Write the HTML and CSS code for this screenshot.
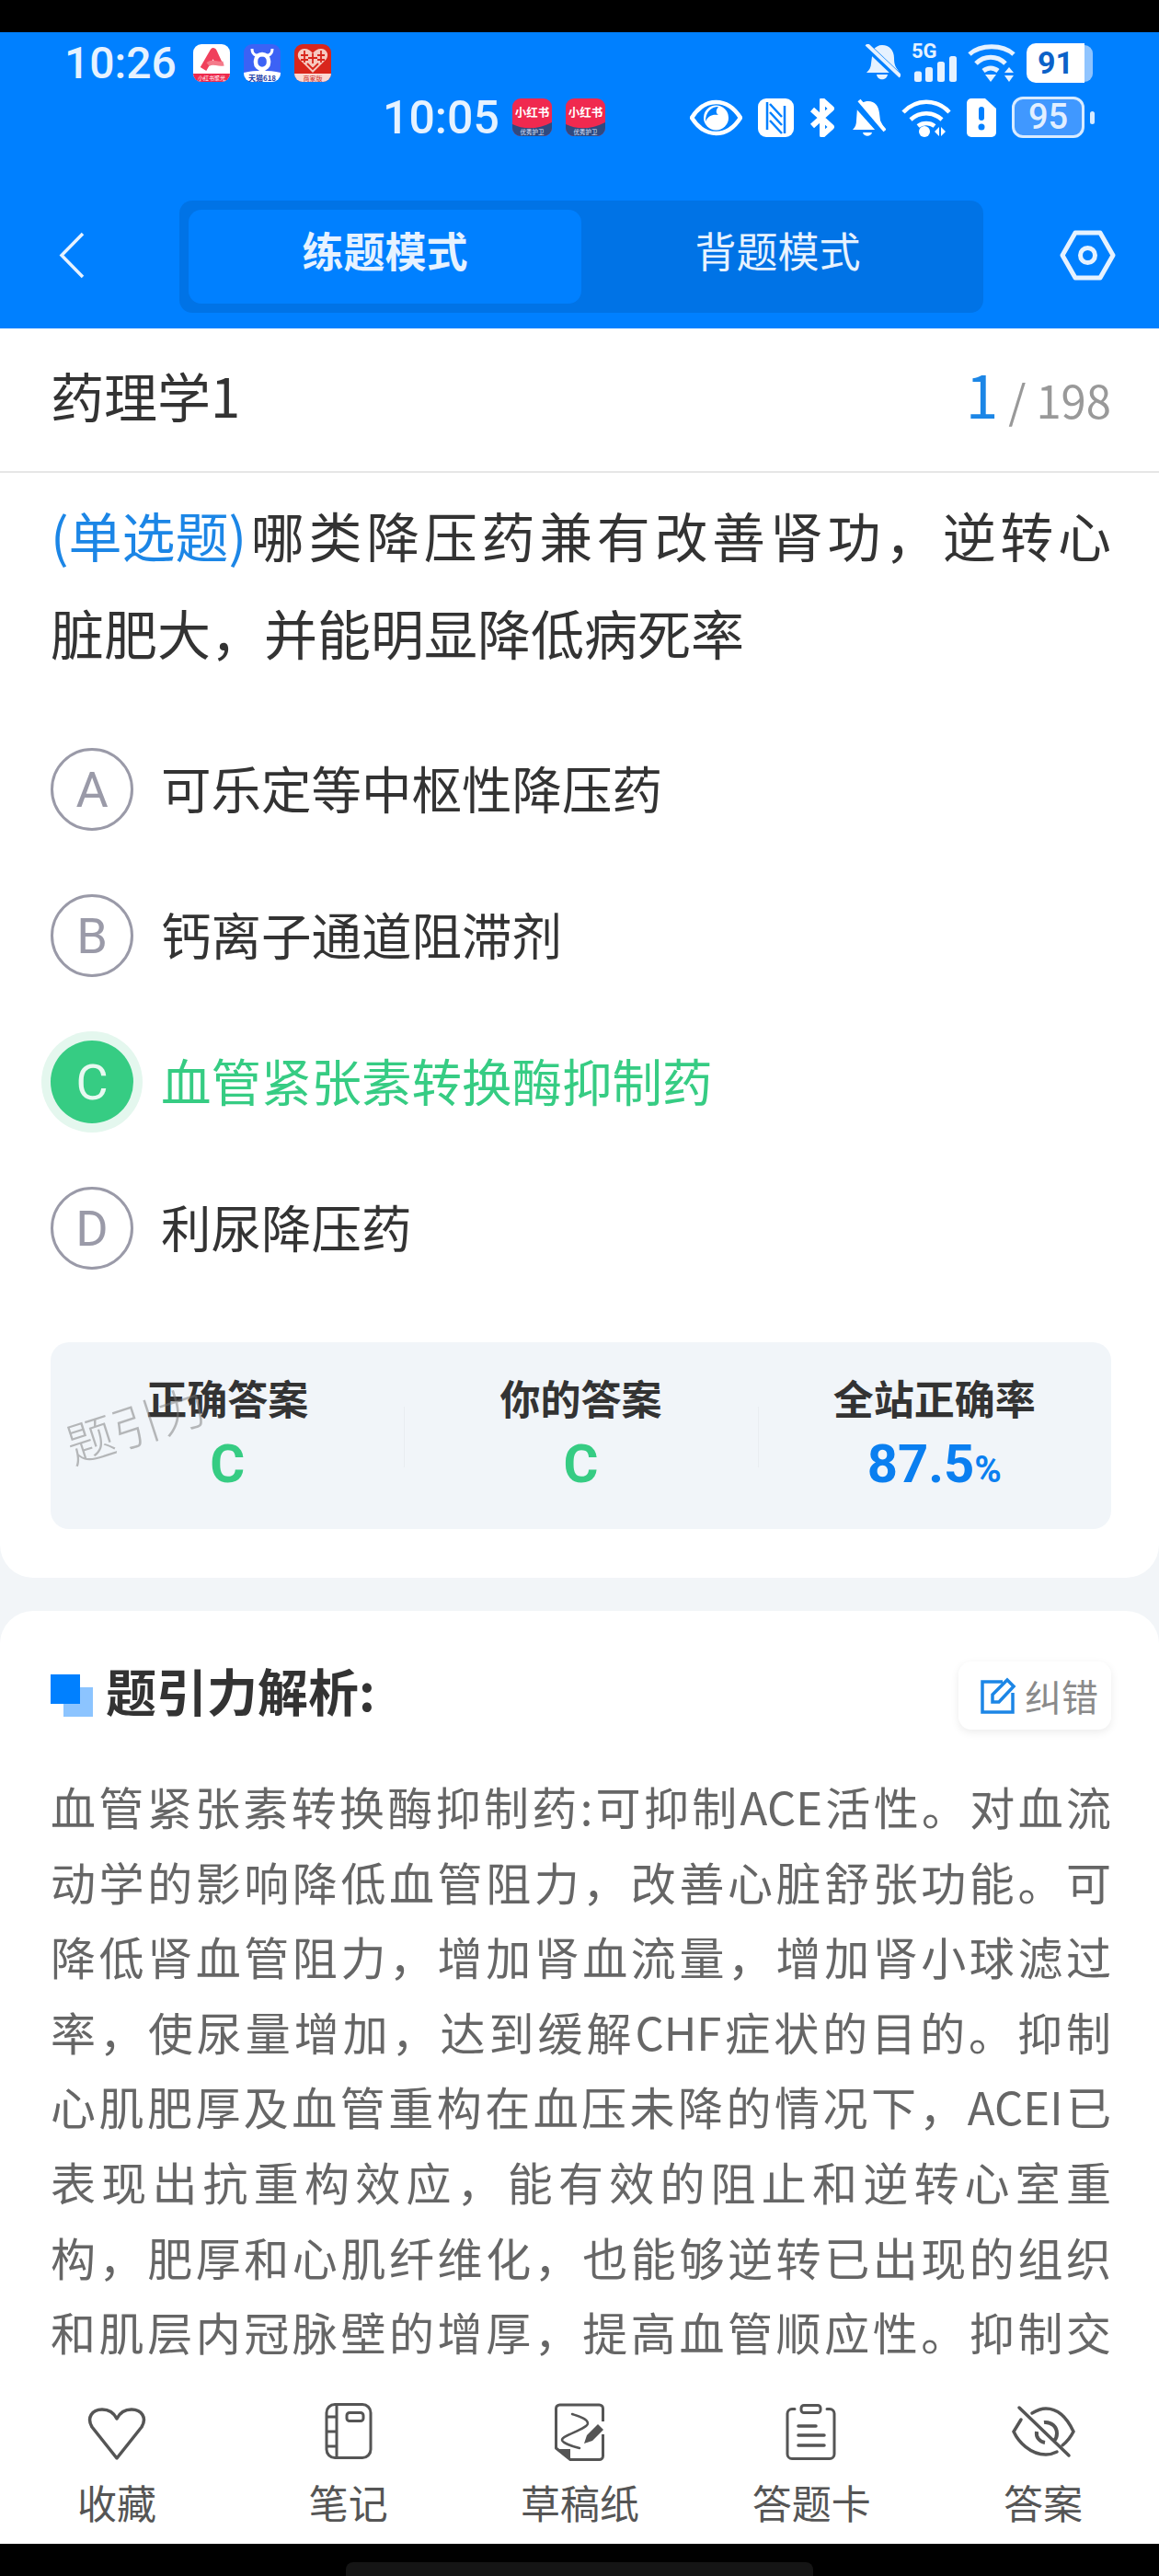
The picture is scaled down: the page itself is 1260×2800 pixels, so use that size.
FILE: index.html
```html
<!DOCTYPE html>
<html lang="zh-CN">
<head>
  <meta charset="UTF-8">
  <meta name="viewport" content="width=device-width, initial-scale=1.0">
  <title>药理学1</title>
  <link rel="stylesheet" href="styles.css">
</head>

<body>
  <div class="camera-strip"></div>

  <header class="top">
    <div class="status status-one">
      <span class="clock">10:26</span>
      <svg class="app" viewBox="0 0 40 41">
        <rect width="40" height="41" rx="9" fill="#fff"/>
        <path d="M0 32h40a9 9 0 0 1-9 9H9a9 9 0 0 1-9-9z" fill="#ee2a4d"/>
        <path d="M11 27 22 8l6 13" fill="none" stroke="#f0405c" stroke-width="7.500" stroke-linejoin="round"/>
        <path d="M16 22c6-5 10 1 17-1" fill="none" stroke="#f47a8a" stroke-width="5"/>
        <text x="20" y="39" class="app-label" fill="#fff" font-size="6">小红书聚光</text>
      </svg>
      <svg class="app" viewBox="0 0 40 41">
        <rect width="40" height="41" rx="9" fill="#3c62f5"/>
        <path d="M0 31c13-3 27-3 40 0v1a9 9 0 0 1-9 9H9a9 9 0 0 1-9-9z" fill="#fff"/>
        <path d="M9 5c0 4 1 6 4 7h14c3-1 4-3 4-7" fill="none" stroke="#fff" stroke-width="3"/>
        <rect x="13" y="11" width="14" height="16" rx="7" fill="none" stroke="#fff" stroke-width="4.500"/>
        <text x="20" y="39.500" class="app-label app-bold" fill="#1f3fa8" font-size="8">天猫618</text>
      </svg>
      <svg class="app" viewBox="0 0 40 41">
        <rect width="40" height="41" rx="9" fill="#d9261c"/>
        <path d="M0 32h40a9 9 0 0 1-9 9H9a9 9 0 0 1-9-9z" fill="#fbd9d4"/>
        <path d="M20 31 5 16c-3-5 0-11 6-11 4 0 7 2 9 5 2-3 5-5 9-5 6 0 9 6 6 11z" fill="#f6c9c0"/>
        <path d="M11 7v13M7 12h8M7 17h8M29 7v13M25 12h8M25 17h8M14 21l6 6 6-6M20 10v11M15 15h10" stroke="#d9261c" stroke-width="1.800" fill="none"/>
        <text x="20" y="39.500" class="app-label" fill="#c8281e" font-size="7">商家版</text>
      </svg>
      <div class="status-icons">
        <svg class="ico" width="39" height="41" viewBox="0 0 39 41">
          <path d="M19 1c8 0 13 6 13 14 0 6 1 9 4 13l2 3H2c3-3 5-6 5-10L9 6c3-3 6-5 10-5zM13 33h12c-1 7-11 7-12 0z" fill="#e6f2ff"/>
          <path d="M1 1l37 35" stroke="#0080ff" stroke-width="8"/>
          <path d="M2 0l37 35" stroke="#e6f2ff" stroke-width="4"/>
        </svg>
        <svg class="ico" width="49" height="50" viewBox="0 0 49 50">
          <text x="0" y="19" class="net" font-size="22">5G</text>
          <rect x="3" y="33.500" width="8" height="11.500" rx="2.500" fill="#e6f2ff"/>
          <rect x="15" y="29" width="8" height="16" rx="2.500" fill="#e6f2ff"/>
          <rect x="28" y="23" width="8" height="22" rx="2.500" fill="#e6f2ff"/>
          <rect x="41" y="17" width="8" height="28" rx="2.500" fill="#e6f2ff"/>
        </svg>
        <svg class="ico" width="52" height="42" viewBox="0 0 52 42">
          <path d="M2 11C14 0 38 0 50 11M9 21c9-9 23-9 32 0M17 29c5-4 11-4 16 0" fill="none" stroke="#e6f2ff" stroke-width="5"/>
          <path d="M19 33h12l-6 8z" fill="#e6f2ff"/>
          <path d="M45 25l5 6H40zM45 41l-5-7h10z" fill="#e6f2ff"/>
        </svg>
        <div class="batt-one"><span class="batt-fill">91</span><i></i></div>
      </div>
    </div>

    <div class="status status-two">
      <span class="clock clock-big">10:05</span>
      <svg class="app app-red" viewBox="0 0 43 41">
        <rect width="43" height="41" rx="9" fill="#f0294f"/>
        <path d="M0 28c12 6 28 6 43-2v6a9 9 0 0 1-9 9H9a9 9 0 0 1-9-9z" fill="#2f4a80"/>
        <text x="21.500" y="20" class="app-label app-bold" fill="#fff" font-size="12.500">小红书</text>
        <text x="21.500" y="38.500" class="app-label" fill="#dfe8ff" font-size="6.500">优秀护卫</text>
      </svg>
      <svg class="app app-red" viewBox="0 0 43 41">
        <rect width="43" height="41" rx="9" fill="#f0294f"/>
        <path d="M0 28c12 6 28 6 43-2v6a9 9 0 0 1-9 9H9a9 9 0 0 1-9-9z" fill="#2f4a80"/>
        <text x="21.500" y="20" class="app-label app-bold" fill="#fff" font-size="12.500">小红书</text>
        <text x="21.500" y="38.500" class="app-label" fill="#dfe8ff" font-size="6.500">优秀护卫</text>
      </svg>
      <div class="status-icons icons-wide">
        <svg class="ico" width="57" height="40" viewBox="0 0 57 40">
          <path d="M2 20C9 9 18 3 28.500 3S48 9 55 20c-7 11-16 17-26.500 17S9 31 2 20z" fill="none" stroke="#fff" stroke-width="4.500"/>
          <circle cx="28.500" cy="20" r="13.500" fill="#fff"/>
          <path d="M31 8c-8 0-14 6-14 16 3-6 7-8 14-7-3-2-3-5 0-9z" fill="#0080ff"/>
        </svg>
        <svg class="ico" width="39" height="42" viewBox="0 0 39 42">
          <rect width="39" height="42" rx="9" fill="#fff"/>
          <path d="M10 4v30M29 8v30" stroke="#0080ff" stroke-width="2.500"/>
          <path d="M13 6l13 14M13 15l13 14M13 24l13 14" stroke="#0080ff" stroke-width="2.500"/>
        </svg>
        <svg class="ico" width="27" height="42" viewBox="0 0 27 42">
          <path d="M3 12l21 19-10 9V2l10 9L3 30" fill="none" stroke="#fff" stroke-width="6" stroke-linejoin="round"/>
        </svg>
        <svg class="ico" width="39" height="42" viewBox="0 0 39 42">
          <path d="M8 10c3-5 7-7 12-7 7 0 11 5 12 13l1 8 5 10H3c3-3 4-6 4-10zM14 37h10c-1 5-9 5-10 0z" fill="#fff"/>
          <path d="M4 2l33 37" stroke="#0080ff" stroke-width="8"/>
          <path d="M10 2l28 33" stroke="#fff" stroke-width="4"/>
        </svg>
        <svg class="ico" width="54" height="42" viewBox="0 0 54 42">
          <path d="M2 15c14-15 36-15 50 0M10 23c10-9 24-9 34 0M18 30c5-4 13-4 18 0" fill="none" stroke="#fff" stroke-width="4.500"/>
          <circle cx="25" cy="36" r="6" fill="#fff"/>
          <path d="M36 36l5-5v10zM48 36l-5-5v10z" fill="#fff"/>
        </svg>
        <svg class="ico" width="32" height="42" viewBox="0 0 32 42">
          <path d="M5 0h15l12 11v26a5 5 0 0 1-5 5H5a5 5 0 0 1-5-5V5a5 5 0 0 1 5-5z" fill="#fff"/>
          <rect x="13" y="9" width="6" height="15" rx="3" fill="#0080ff"/>
          <circle cx="16" cy="31" r="3.500" fill="#0080ff"/>
        </svg>
        <div class="batt-two"><span class="batt-body">95</span><i></i></div>
      </div>
    </div>

    <nav class="nav">
      <svg class="back" width="28" height="51" viewBox="0 0 28 51">
        <path d="M26 2 3 25.500 26 49" fill="none" stroke="#e6f2ff" stroke-width="3.500"/>
      </svg>
      <div class="tabs">
        <div class="tab tab-active">练题模式</div>
        <div class="tab">背题模式</div>
      </div>
      <svg class="gear" width="61" height="55" viewBox="0 0 61 55">
        <path d="M17 3h27l14 24.500L44 52H17L3 27.500z" fill="none" stroke="#e6f2ff" stroke-width="5" stroke-linejoin="round"/>
        <circle cx="30.500" cy="27.500" r="8" fill="none" stroke="#e6f2ff" stroke-width="5"/>
      </svg>
    </nav>
  </header>

  <main class="scroll">
    <section class="card card-question">
      <div class="title-row">
        <span class="subject">药理学1</span>
        <span class="counter"><b>1</b> / 198</span>
      </div>

      <div class="question">
        <span class="q-line"><span class="qtype">(单选题)</span>哪类降压药兼有改善肾功，逆转心</span>
        <span class="q-last">脏肥大，并能明显降低病死率</span>
      </div>

      <ul class="options">
        <li class="option"><span class="letter">A</span><span class="option-text">可乐定等中枢性降压药</span></li>
        <li class="option"><span class="letter">B</span><span class="option-text">钙离子通道阻滞剂</span></li>
        <li class="option option-right"><span class="letter">C</span><span class="option-text">血管紧张素转换酶抑制药</span></li>
        <li class="option"><span class="letter">D</span><span class="option-text">利尿降压药</span></li>
      </ul>

      <div class="stats">
        <div class="stat">
          <div class="stat-label">正确答案</div>
          <div class="stat-value green">C</div>
        </div>
        <div class="stat">
          <div class="stat-label">你的答案</div>
          <div class="stat-value green">C</div>
        </div>
        <div class="stat">
          <div class="stat-label">全站正确率</div>
          <div class="stat-value blue">87.5<small>%</small></div>
        </div>
        <span class="watermark">题引力</span>
      </div>
    </section>

    <section class="card card-analysis">
      <div class="analysis-head">
        <span class="mark"><i></i></span>
        <h2>题引力解析:</h2>
        <button class="report">
          <svg width="40" height="40" viewBox="0 0 40 40">
            <path d="M24 5H2v33h33V17" fill="none" stroke="#1c86e6" stroke-width="3.500"/>
            <path d="M13 27V19L29 3l7 7-16 17z" fill="none" stroke="#1c86e6" stroke-width="3.500"/>
          </svg>
          纠错
        </button>
      </div>
      <p class="analysis">血管紧张素转换酶抑制药:可抑制ACE活性。对血流<br>动学的影响降低血管阻力，改善心脏舒张功能。可<br>降低肾血管阻力，增加肾血流量，增加肾小球滤过<br>率，使尿量增加，达到缓解CHF症状的目的。抑制<br>心肌肥厚及血管重构在血压未降的情况下，ACEI已<br>表现出抗重构效应，能有效的阻止和逆转心室重<br>构，肥厚和心肌纤维化，也能够逆转已出现的组织<br>和肌层内冠脉壁的增厚，提高血管顺应性。抑制交</p>
    </section>
  </main>

  <footer class="toolbar">
    <div class="tool">
      <svg width="66" height="66" viewBox="0 0 66 66">
        <path d="M33 61 6 27C0 17 6 8 17 8c7 0 13 4 16 10C36 12 42 8 49 8c11 0 17 9 11 19z" fill="none" stroke="#555" stroke-width="3.500" stroke-linejoin="round"/>
      </svg>
      <span>收藏</span>
    </div>
    <div class="tool">
      <svg width="66" height="66" viewBox="0 0 66 66">
        <rect x="9" y="2.500" width="48" height="58" rx="9" fill="none" stroke="#555" stroke-width="3"/>
        <path d="M20 2.500v58M9 16h11M9 32h11M9 48h11" fill="none" stroke="#555" stroke-width="3"/>
        <rect x="31" y="11.500" width="18" height="9" rx="3" fill="none" stroke="#555" stroke-width="3"/>
      </svg>
      <span>笔记</span>
    </div>
    <div class="tool">
      <svg width="66" height="66" viewBox="0 0 66 66">
        <path d="M58.500 21V7a4 4 0 0 0-4-4H11.500a4 4 0 0 0-4 4v43L23 62.500h31.500a4 4 0 0 0 4-4V35" fill="none" stroke="#555" stroke-width="3" stroke-linejoin="round"/>
        <path d="M8 51h15v12z" fill="#555"/>
        <path d="M25 13c6 2 17 5 17 10 0 6-28 13-28 18 0 3 11 7 19 9" fill="none" stroke="#555" stroke-width="2.500" stroke-linecap="round"/>
        <path d="M38 45l3-9 12-12 6 6-12 12z" fill="#555"/>
      </svg>
      <span>草稿纸</span>
    </div>
    <div class="tool">
      <svg width="66" height="66" viewBox="0 0 66 66">
        <path d="M15 7.500h-3a5 5 0 0 0-5 5v44a5 5 0 0 0 5 5h41a5 5 0 0 0 5-5v-44a5 5 0 0 0-5-5h-3" fill="none" stroke="#555" stroke-width="3" stroke-linecap="round"/>
        <rect x="22" y="3.500" width="21" height="8" rx="3" fill="none" stroke="#555" stroke-width="3"/>
        <path d="M19 26h19M19 36h28M19 47h28" fill="none" stroke="#555" stroke-width="3.500" stroke-linecap="round"/>
      </svg>
      <span>答题卡</span>
    </div>
    <div class="tool">
      <svg width="70" height="66" viewBox="0 0 70 66">
        <path d="M11 19 3 32c5 11 18 25 35 25 4 0 8-1 12-3M23 12c5-3 10-5 15-5 13 0 23 10 30 25-3 6-7 11-12 15" fill="none" stroke="#555" stroke-width="3.500" stroke-linecap="round"/>
        <path d="M36 22c8-1 14 5 14 12 0 3-1 6-3 8M28 32c-1 6 3 11 9 12" fill="none" stroke="#555" stroke-width="4"/>
        <path d="M9 6 63 58" stroke="#555" stroke-width="3.500" stroke-linecap="round"/>
      </svg>
      <span>答案</span>
    </div>
  </footer>

  <div class="gesture-strip"><div class="home-pill"></div></div>
</body>
</html>
```

FILE: styles.css
```css
* {
  box-sizing: border-box;
}

body {
  margin: 0;
  width: 1260px;
  height: 2800px;
  overflow: hidden;
  display: flex;
  flex-direction: column;
  background-color: #f2f5f8;
  color: #333;
  font-family: "Noto Sans CJK SC", "Noto Sans", sans-serif;
}

.camera-strip {
  height: 35px;
  background-color: #000;
}

/* header: two status rows and the mode tabs */
.top {
  height: 322px;
  background-color: #0080ff;
  color: #e6f2ff;
}

.status {
  display: flex;
  align-items: center;
  padding-right: 70px;
}

.status-one {
  height: 43px;
  margin-top: 12px;
  padding-left: 70px;
  gap: 15px;
}

.status-two {
  height: 43px;
  margin-top: 16px;
  padding-left: 416px;
  gap: 15px;
}

.clock {
  width: 125px;
  font-family: Roboto, sans-serif;
  font-size: 48px;
  font-weight: 500;
  line-height: 1;
}

.clock-big {
  width: 126px;
  font-size: 50px;
}

.app {
  width: 40px;
  height: 41px;
  flex: none;
}

.app-red {
  width: 43px;
}

.app-label {
  text-anchor: middle;
  font-family: "Noto Sans CJK SC", sans-serif;
}

.app-bold {
  font-weight: 700;
}

.net {
  font-family: Roboto, sans-serif;
  font-weight: 700;
  fill: #e6f2ff;
}

.status-icons {
  margin-left: auto;
  display: flex;
  align-items: center;
  gap: 12px;
}

.icons-wide {
  gap: 17px;
}

.ico {
  display: block;
  flex: none;
}

.batt-one {
  display: flex;
  align-items: center;
  width: 74px;
  height: 43px;
}

.batt-fill {
  width: 63px;
  height: 43px;
  border-radius: 10px 0 0 10px;
  background-color: #fff;
  color: #0b62c8;
  font-family: Roboto, sans-serif;
  font-size: 34px;
  font-weight: 700;
  line-height: 43px;
  text-align: center;
}

.batt-one i {
  width: 9px;
  height: 40px;
  border-radius: 0 10px 10px 0;
  background-color: #8fc4ff;
}

.batt-two {
  display: flex;
  align-items: center;
  gap: 6px;
}

.batt-body {
  width: 79px;
  height: 45px;
  border: 3px solid #d8ebff;
  border-radius: 12px;
  background-color: #4098ff;
  color: #e2efff;
  font-family: Roboto, sans-serif;
  font-size: 38px;
  font-weight: 500;
  line-height: 38px;
  text-align: center;
}

.batt-two i {
  width: 5px;
  height: 14px;
  border-radius: 3px;
  background-color: #d8ebff;
}

.nav {
  display: flex;
  align-items: center;
  height: 122px;
  margin-top: 69px;
  padding-left: 64px;
}

.back,
.gear {
  margin-bottom: 3px;
}

.tabs {
  display: flex;
  width: 874px;
  height: 122px;
  margin-left: 103px;
  padding: 10px;
  border-radius: 14px;
  background-color: #0073e6;
}

.tab {
  flex: 1;
  font-size: 45px;
  line-height: 88px;
  text-align: center;
}

.tab-active {
  border-radius: 14px;
  background-color: #0080ff;
  font-weight: 700;
}

.gear {
  margin-left: 83px;
}

/* scrolling content under the header */
.scroll {
  flex: 1;
  min-height: 0;
  overflow: hidden;
}

.card {
  background-color: #fff;
}

.card-question {
  height: 1358px;
  border-radius: 0 0 36px 36px;
}

.title-row {
  display: flex;
  align-items: center;
  justify-content: space-between;
  height: 157px;
  padding: 0 52px 12px 55px;
  border-bottom: 2px solid #e6e6e6;
}

.subject {
  font-size: 58px;
}

.counter {
  margin-bottom: 3px;
  color: #999;
  font-size: 49px;
}

.counter b {
  color: #1c86e6;
  font-size: 64px;
  font-weight: 400;
}

.question {
  margin: 14px 52px 0 55px;
  font-size: 58px;
  line-height: 106px;
}

.q-line,
.q-last {
  display: block;
}

.q-line {
  text-align: justify;
  text-align-last: justify;
}

.qtype {
  display: inline-block;
  color: #1c86e6;
}

.options {
  margin: 73px 0 0;
  padding: 0 0 10px 55px;
  list-style: none;
}

.option {
  display: flex;
  align-items: center;
  gap: 30px;
  height: 90px;
  margin-bottom: 69px;
  font-size: 54.5px;
}

.option-text {
  margin-bottom: 5px;
}

.letter {
  display: flex;
  align-items: center;
  justify-content: center;
  width: 90px;
  height: 90px;
  border: 3px solid #9a9aa8;
  border-radius: 50%;
  color: #9a9aa8;
  font-family: Roboto, sans-serif;
  font-size: 54px;
}

.option-right {
  color: #36cc83;
}

.option-right .letter {
  border: none;
  background-color: #36cc83;
  box-shadow: 0 0 0 10px #e4f7ee;
  color: #e8f9f1;
}

.stats {
  position: relative;
  display: grid;
  grid-template-columns: repeat(3, 1fr);
  height: 203px;
  margin: 0 52px 0 55px;
  padding-top: 30px;
  border-radius: 20px;
  background-color: #f1f5f9;
  text-align: center;
}

.stat + .stat {
  background: linear-gradient(#e9edf1, #e9edf1) left 40px / 1px 66px no-repeat;
}

.stat-label {
  font-size: 44px;
  font-weight: 700;
  line-height: 60px;
}

.stat-value {
  margin-top: 9px;
  font-family: Roboto, sans-serif;
  font-size: 58px;
  font-weight: 700;
  line-height: 66px;
}

.stat-value small {
  font-size: 40px;
}

.green {
  color: #36cc83;
}

.blue {
  color: #0a7ff0;
}

.watermark {
  position: absolute;
  left: 14px;
  top: 50px;
  color: rgba(120, 120, 120, 0.5);
  font-size: 52px;
  font-weight: 300;
  transform: rotate(-18deg);
}

.card-analysis {
  height: 900px;
  margin-top: 36px;
  padding: 55px 52px 0 55px;
  border-radius: 36px 36px 0 0;
}

.analysis-head {
  display: flex;
  align-items: center;
  height: 74px;
}

.mark {
  position: relative;
  width: 46px;
  height: 46px;
}

.mark::before,
.mark i {
  content: "";
  position: absolute;
  width: 32px;
  height: 32px;
}

.mark::before {
  left: 0;
  top: 0;
  z-index: 1;
  background-color: #0080ff;
}

.mark i {
  left: 14px;
  top: 14px;
  background-color: #8cc4ff;
}

.analysis-head h2 {
  margin: 0 0 14px 14px;
  font-size: 55px;
  font-weight: 700;
  line-height: 60px;
}

.report {
  display: flex;
  align-items: center;
  gap: 8px;
  width: 166px;
  height: 74px;
  margin-left: auto;
  padding: 0 0 0 24px;
  border: none;
  border-radius: 14px;
  background-color: #fff;
  box-shadow: 0 3px 10px rgba(0, 0, 0, 0.08);
  color: #8a8a8a;
  font-family: inherit;
  font-size: 40px;
}

.analysis {
  margin: 42px 0 0;
  color: #666;
  font-size: 49px;
  line-height: 81.6px;
  text-align: justify;
  text-align-last: justify;
}

/* bottom action bar */
.toolbar {
  display: flex;
  flex: none;
  height: 190px;
  margin-top: -190px;
  position: relative;
  padding: 36px 0 0 1px;
  background-color: #fff;
}

.tool {
  width: 252.5px;
  display: flex;
  flex-direction: column;
  align-items: center;
  color: #555;
  font-size: 43px;
}

.tool svg {
  display: block;
  height: 66px;
}

.tool span {
  margin-top: 12px;
  line-height: 60px;
}

.gesture-strip {
  display: flex;
  justify-content: center;
  align-items: flex-end;
  height: 35px;
  flex: none;
  background-color: #000;
}

.home-pill {
  width: 508px;
  height: 15px;
  border-radius: 8px 8px 0 0;
  background-color: #151515;
}
```
